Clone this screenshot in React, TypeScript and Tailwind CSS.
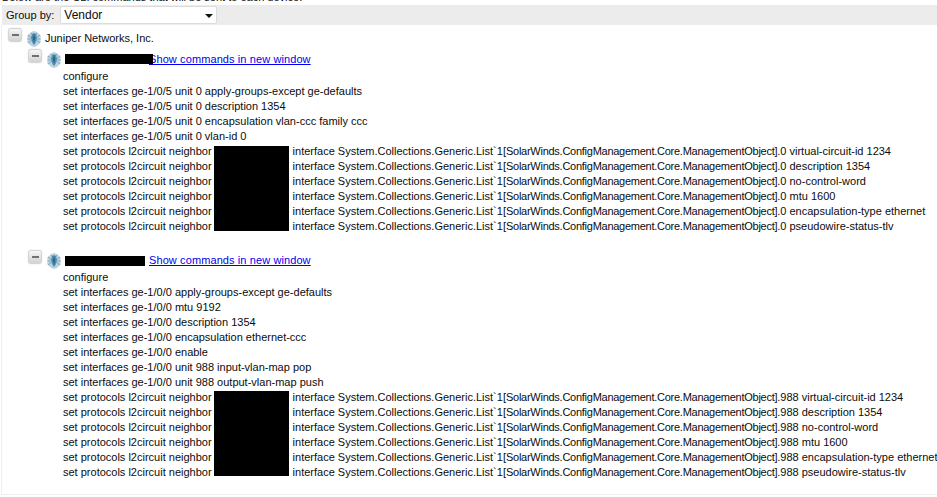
import React from 'react';

const Toggle = () => (
  <span className="flex h-[14px] w-[14px] shrink-0 items-center justify-center self-start rounded-[3px] border border-[#d4d4d4] bg-gradient-to-b from-[#f6f6f6] to-[#d2d2d2] shadow-[0_0_1px_#bbbbbb]">
    <span className="h-[2px] w-[7px] bg-[#707070]" />
  </span>
);

const VendorIcon = () => (
  <svg width="16" height="16" viewBox="0 0 16 16" className="mt-[3px] shrink-0 self-start">
    <path d="M5 1 L8 0 L11 1 L13 3 L15 5 L14 8 L15 11 L13 13 L11 15 L8 16 L5 15 L3 13 L1 11 L2 8 L1 5 L3 3 Z" fill="#bcd2df" />
    <path d="M2 4 L6 7 M14 4 L10 7 M1 8 L5 8 M15 8 L11 8 M2 12 L6 9 M14 12 L10 9 M5 2 L7 5 M11 2 L9 5" stroke="#7fa9c0" strokeWidth="1" />
    <path d="M6 3 L8 2 L10 3 L11 7 L9.5 12 L8 14 L6.5 12 L5 7 Z" fill="#4f8dae" />
    <path d="M8 3 L9 7 L8 12 L7 7 Z" fill="#235f7e" />
  </svg>
);

const Neighbor = ({ rest, boxClass = 'h-[15px]' }: { rest: string; boxClass?: string }) => (
  <div className="flex h-[15px] items-center whitespace-nowrap">
    <span>set protocols l2circuit neighbor</span>
    <span className={`ml-[2px] w-[75px] shrink-0 bg-black ${boxClass}`} />
    <span className="ml-[4px]">
      interface System.Collections.Generic.List`1[
      <span className="tracking-[-0.26px]">SolarWinds.ConfigManagement.Core.ManagementObject]</span>.{rest}
    </span>
  </div>
);

const Device = ({
  nameWidth,
  gap,
  nameTop,
  lines,
  unit,
  firstBox,
  lastBox,
}: {
  nameWidth: number;
  gap: number;
  nameTop: number;
  lines: string[];
  unit: string;
  firstBox: string;
  lastBox: string;
}) => (
  <div>
    <div className="flex h-[20px] items-center">
      <Toggle />
      <span className="ml-[4px] flex self-start"><VendorIcon /></span>
      <span
        className="relative z-10 ml-[3px] h-[10px] shrink-0 bg-black"
        style={{ width: nameWidth, marginRight: gap, marginTop: nameTop }}
      />
      <a href="#" className="tracking-[0.1px] text-[#0000ee] underline">
        Show commands in new window
      </a>
    </div>
    <div className="ml-[35px]">
      {lines.map((line) => (
        <div key={line} className="h-[15px] whitespace-nowrap leading-[15px]">
          {line}
        </div>
      ))}
      <Neighbor rest={`${unit} virtual-circuit-id 1234`} boxClass={firstBox} />
      <Neighbor rest={`${unit} description 1354`} />
      <Neighbor rest={`${unit} no-control-word`} />
      <Neighbor rest={`${unit} mtu 1600`} />
      <Neighbor rest={`${unit} encapsulation-type ethernet`} />
      <Neighbor rest={`${unit} pseudowire-status-tlv`} boxClass={lastBox} />
    </div>
  </div>
);

export default function App() {
  return (
    <div className="h-[497px] w-[937px] overflow-hidden bg-white font-['Liberation_Sans',Arial,sans-serif] text-[11px] text-[#0c0c0c]">
      <div className="h-[5px] overflow-hidden">
        <div className="-mt-[9px] whitespace-nowrap pl-[2px] leading-[13px]">
          Below are the CLI commands that will be sent to each device.
        </div>
      </div>
      <div className="ml-[2px] flex h-[20px] items-center bg-[#ececec] pl-[4px]">
        <span>Group by:</span>
        <div className="ml-[6px] flex h-[18px] w-[157px] items-center justify-between rounded-[2px] border border-[#dcdcdc] bg-white pl-[3px] pr-[2px] text-[12px]">
          <span>Vendor</span>
          <svg width="8" height="4" viewBox="0 0 8 4" className="mr-[1px] mt-[2px]">
            <path d="M0 0 H8 L4 4 Z" fill="#111" />
          </svg>
        </div>
      </div>
      <div className="ml-[1px] h-[470px] border-b border-l border-[#eeeeee] pl-[6px] pt-[3px]">
        <div className="flex h-[20px] items-center">
          <Toggle />
          <span className="ml-[4px] flex self-start"><VendorIcon /></span>
          <span className="ml-[3px]">Juniper Networks, Inc.</span>
        </div>
        <div className="ml-[20px] mt-[1px]">
          <Device
            nameWidth={88}
            gap={-4}
            nameTop={0}
            unit="0"
            firstBox="mt-[2px] h-[13px]"
            lastBox="mb-[3px] h-[12px]"
            lines={[
              'configure',
              'set interfaces ge-1/0/5 unit 0 apply-groups-except ge-defaults',
              'set interfaces ge-1/0/5 unit 0 description 1354',
              'set interfaces ge-1/0/5 unit 0 encapsulation vlan-ccc family ccc',
              'set interfaces ge-1/0/5 unit 0 vlan-id 0',
            ]}
          />
          <div className="mt-[16px]">
            <Device
              nameWidth={80}
              gap={4}
              nameTop={1}
              unit="988"
              firstBox="mt-[1px] h-[14px]"
              lastBox="mb-[4px] h-[11px]"
              lines={[
                'configure',
                'set interfaces ge-1/0/0 apply-groups-except ge-defaults',
                'set interfaces ge-1/0/0 mtu 9192',
                'set interfaces ge-1/0/0 description 1354',
                'set interfaces ge-1/0/0 encapsulation ethernet-ccc',
                'set interfaces ge-1/0/0 enable',
                'set interfaces ge-1/0/0 unit 988 input-vlan-map pop',
                'set interfaces ge-1/0/0 unit 988 output-vlan-map push',
              ]}
            />
          </div>
        </div>
      </div>
    </div>
  );
}
